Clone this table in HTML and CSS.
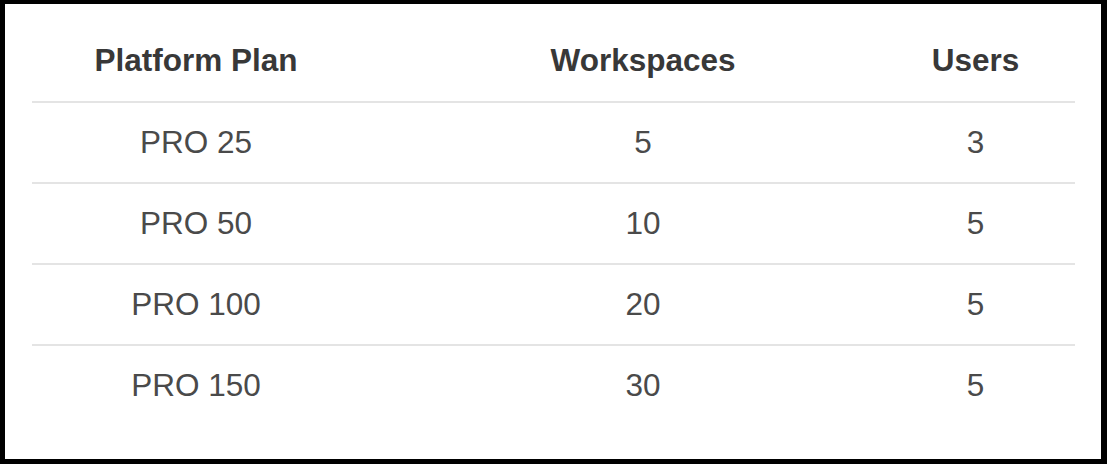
FILE: index.html
```html
<!DOCTYPE html>
<html>
<head>
<meta charset="utf-8">
<link rel="stylesheet" href="styles.css">
</head>
<body>
<div class="frame">
  <div class="plans">
    <div class="row head">
      <div class="cell c1">Platform Plan</div>
      <div class="cell c2">Workspaces</div>
      <div class="cell c3">Users</div>
    </div>
    <div class="row">
      <div class="cell c1">PRO 25</div>
      <div class="cell c2">5</div>
      <div class="cell c3">3</div>
    </div>
    <div class="row">
      <div class="cell c1">PRO 50</div>
      <div class="cell c2">10</div>
      <div class="cell c3">5</div>
    </div>
    <div class="row">
      <div class="cell c1">PRO 100</div>
      <div class="cell c2">20</div>
      <div class="cell c3">5</div>
    </div>
    <div class="row last">
      <div class="cell c1">PRO 150</div>
      <div class="cell c2">30</div>
      <div class="cell c3">5</div>
    </div>
  </div>
</div>
</body>
</html>
```
FILE: styles.css
```css
html, body {
  margin: 0;
  padding: 0;
  background: #fff;
}
.frame {
  box-sizing: border-box;
  width: 1107px;
  height: 464px;
  border-style: solid;
  border-color: #000;
  border-width: 4px 6px 5px 5px;
  padding: 17px 26px 0 27px;
  background: #fff;
  font-family: "Liberation Sans", Arial, sans-serif;
}
.plans {
  display: flex;
  flex-direction: column;
}
.row {
  display: grid;
  grid-template-columns: 328px 566px 149px;
  height: 79px;
  align-items: center;
  border-bottom: 2px solid #e4e4e4;
  font-size: 31.5px;
  color: #4a4a4a;
}
.row.head {
  height: 80px;
  font-weight: bold;
  color: #383838;
}
.row.last {
  border-bottom: none;
}
.cell {
  text-align: center;
  line-height: 1;
}
.c3 {
  padding-right: 50px;
}
```
